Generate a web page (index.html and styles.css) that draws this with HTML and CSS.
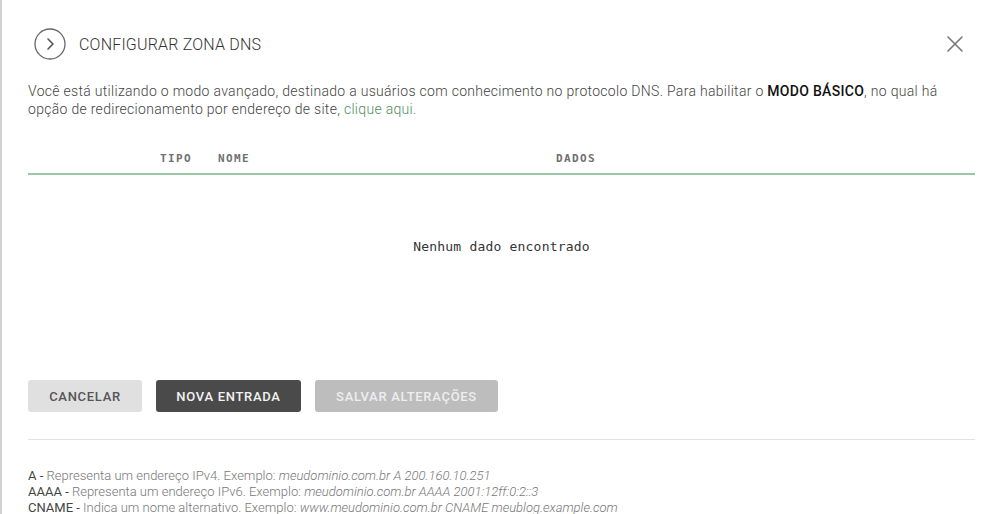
FILE: index.html
```html
<!DOCTYPE html>
<html lang="pt-BR">
<head>
    <meta charset="UTF-8">
    <meta name="viewport" content="width=device-width, initial-scale=1.0">
    <title>Configurar zona DNS</title>
    <link rel="stylesheet" href="styles.css">
</head>
<body>
    <div class="modal">
        <div class="modal-header">
            <div class="header-left">
                <span class="header-icon">
                    <svg width="32" height="32" viewBox="0 0 32 32">
                        <circle cx="16" cy="16" r="15" fill="none" stroke="#666" stroke-width="1.3"/>
                        <path d="M14 11 L19 16 L14 21" fill="none" stroke="#555" stroke-width="1.6" stroke-linecap="round" stroke-linejoin="round"/>
                    </svg>
                </span>
                <span class="header-title">CONFIGURAR ZONA DNS</span>
            </div>
            <button class="close-btn" aria-label="Fechar">
                <svg width="18" height="18" viewBox="0 0 18 18">
                    <path d="M2 2 L16 16 M16 2 L2 16" stroke="#777" stroke-width="1.6" stroke-linecap="round"/>
                </svg>
            </button>
        </div>

        <p class="intro">
            Você está utilizando o modo avançado, destinado a usuários com conhecimento no protocolo DNS. Para habilitar o <strong>MODO BÁSICO</strong>, no qual há opção de redirecionamento por endereço de site, <a href="#">clique aqui.</a>
        </p>

        <div class="dns-table">
            <div class="table-head">
                <span class="col-tipo">TIPO</span>
                <span class="col-nome">NOME</span>
                <span class="col-dados">DADOS</span>
            </div>
            <div class="table-empty">Nenhum dado encontrado</div>
        </div>

        <div class="actions">
            <button class="btn btn-light">CANCELAR</button>
            <button class="btn btn-dark">NOVA ENTRADA</button>
            <button class="btn btn-disabled">SALVAR ALTERAÇÕES</button>
        </div>

        <div class="legend">
            <div><b>A -</b> Representa um endereço IPv4. Exemplo: <i>meudominio.com.br A 200.160.10.251</i></div>
            <div><b>AAAA -</b> Representa um endereço IPv6. Exemplo: <i>meudominio.com.br AAAA 2001:12ff:0:2::3</i></div>
            <div><b>CNAME -</b> Indica um nome alternativo. Exemplo: <i>www.meudominio.com.br CNAME meublog.example.com</i></div>
        </div>
    </div>
</body>
</html>
```

FILE: styles.css
```css
body {
    margin: 0;
    padding: 0;
    background: #fff;
    color: #555;
    font-family: Roboto, 'Liberation Sans', sans-serif;
    overflow: hidden;
}

.modal {
    height: 514px;
    border-left: 2px solid #d2d2d2;
    padding: 0 25px 0 26px;
    box-sizing: border-box;
}

.modal-header {
    display: flex;
    justify-content: space-between;
    align-items: center;
    padding-top: 28px;
    height: 32px;
}

.header-left {
    display: flex;
    align-items: center;
    gap: 13px;
    padding-left: 6px;
}

.header-icon {
    display: flex;
    width: 32px;
    height: 32px;
}

.header-title {
    font-size: 16px;
    font-weight: 300;
    letter-spacing: 0.2px;
    color: #333;
}

.close-btn {
    background: none;
    border: 0;
    padding: 0;
    margin-right: 11px;
    display: flex;
    cursor: pointer;
}

.intro {
    margin: 22px 0 0;
    font-size: 14px;
    font-weight: 300;
    line-height: 18px;
    letter-spacing: 0.3px;
    color: #444;
}

.intro strong {
    font-weight: 500;
    color: #111;
}

.intro a {
    color: #4f8f60;
    text-decoration: none;
}

.dns-table {
    margin-top: 25px;
}

.table-head {
    display: flex;
    align-items: center;
    height: 30px;
    border-bottom: 2px solid #9dc7a6;
    font-family: 'DejaVu Sans Mono', monospace;
    font-weight: bold;
    font-size: 11px;
    letter-spacing: 1.4px;
    color: #707070;
}

.col-tipo {
    margin-left: 132px;
    width: 58px;
}

.col-nome {
    width: 338px;
}

.table-empty {
    height: 205px;
    box-sizing: border-box;
    padding-top: 64px;
    text-align: center;
    font-family: 'DejaVu Sans Mono', monospace;
    font-size: 13px;
    line-height: 16px;
    letter-spacing: 0.2px;
    color: #333;
}

.actions {
    display: flex;
    gap: 14px;
    padding-bottom: 27px;
    border-bottom: 1px solid #e3e3e3;
}

.btn {
    height: 32px;
    border: 0;
    border-radius: 3px;
    font-family: Roboto, 'Liberation Sans', sans-serif;
    font-size: 13px;
    font-weight: 500;
    letter-spacing: 0.7px;
    cursor: pointer;
}

.btn-light {
    width: 114px;
    background: #e0e0e0;
    color: #555;
}

.btn-dark {
    width: 145px;
    background: #4a4a4a;
    color: #f2f2f2;
}

.btn-disabled {
    width: 183px;
    background: #bdbdbd;
    color: #eee;
    cursor: default;
}

.legend {
    margin-top: 28px;
    font-size: 13px;
    font-weight: 300;
    line-height: 16px;
    color: #777;
}

.legend b {
    font-weight: 400;
    color: #444;
}
```
